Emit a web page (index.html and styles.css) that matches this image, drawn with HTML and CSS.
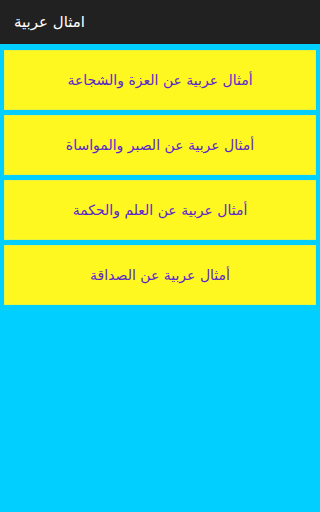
FILE: index.html
```html
<!DOCTYPE html>
<html lang="ar">
<head>
<meta charset="utf-8">
<link rel="stylesheet" href="styles.css">
</head>
<body>
<header class="bar"><span class="title" dir="rtl">امثال عربية</span></header>
<main class="list">
  <div class="card" dir="rtl">أمثال عربية عن العزة والشجاعة</div>
  <div class="card" dir="rtl">أمثال عربية عن الصبر والمواساة</div>
  <div class="card" dir="rtl">أمثال عربية عن العلم والحكمة</div>
  <div class="card" dir="rtl">أمثال عربية عن الصداقة</div>
</main>
</body>
</html>
```
FILE: styles.css
```css
html, body {
  margin: 0;
  padding: 0;
  height: 100%;
}
body {
  background: #00cfff;
  font-family: "DejaVu Sans", sans-serif;
}
.bar {
  height: 44px;
  background: #212121;
  display: flex;
  align-items: center;
  padding-left: 14px;
}
.title {
  color: #ffffff;
  font-size: 15px;
}
.list {
  display: flex;
  flex-direction: column;
  gap: 5px;
  padding: 6px 4px 0 4px;
}
.card {
  height: 60px;
  box-sizing: border-box;
  background: #fff820;
  border: 1px solid #e8f040;
  display: flex;
  align-items: center;
  justify-content: center;
  color: #5a26cc;
  font-size: 14px;
}
```
